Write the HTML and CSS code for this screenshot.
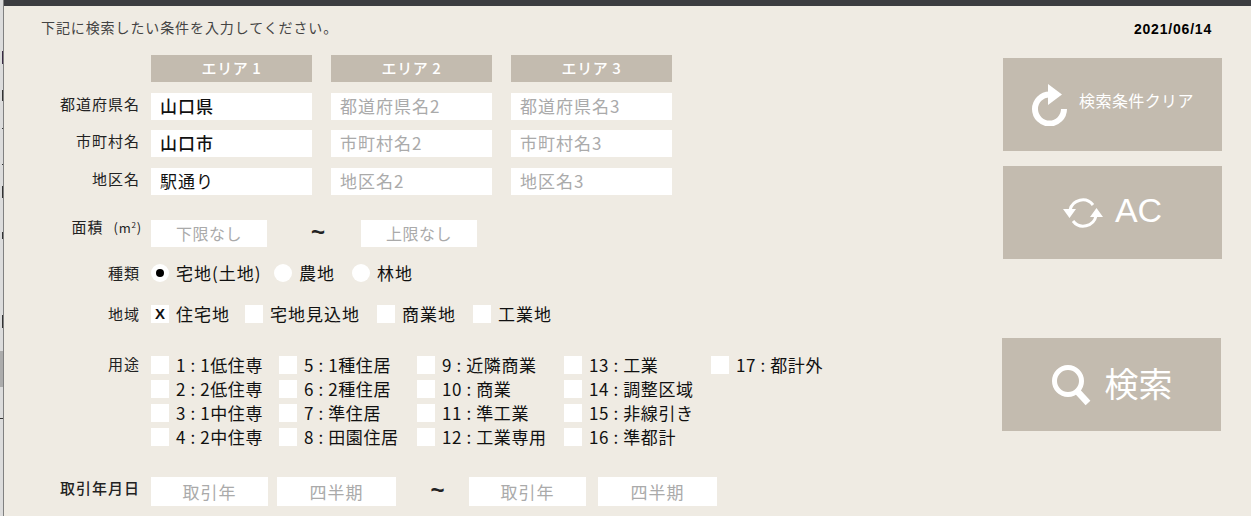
FILE: index.html
```html
<!DOCTYPE html>
<html lang="ja">
<head>
<meta charset="utf-8">
<title>検索条件</title>
<link rel="stylesheet" href="styles.css">
</head>
<body>
<div class="edge"><i class="m1"></i><i class="m2"></i><i class="m3"></i><i class="m4"></i><i class="m5"></i><i class="m6"></i><i class="m7"></i><i class="m8"></i><i class="m9"></i></div>
<div class="panel">
  <div class="topbar"></div>
  <div class="content">
    <div class="form">
      <p class="intro">下記に検索したい条件を入力してください。</p>

      <div class="row heads">
        <div class="label"></div>
        <div class="head">エリア 1</div><div class="head">エリア 2</div><div class="head">エリア 3</div>
      </div>
      <div class="row area"><div class="label">都道府県名</div><div class="field filled strong">山口県</div><div class="field">都道府県名2</div><div class="field">都道府県名3</div></div>
      <div class="row area"><div class="label">市町村名</div><div class="field filled strong">山口市</div><div class="field">市町村名2</div><div class="field">市町村名3</div></div>
      <div class="row area"><div class="label">地区名</div><div class="field filled">駅通り</div><div class="field">地区名2</div><div class="field">地区名3</div></div>

      <div class="row size">
        <div class="label">面積<span class="unit">(m<sup>2</sup>)</span></div>
        <div class="field center w116">下限なし</div>
        <div class="tilde t1">~</div>
        <div class="field center w116">上限なし</div>
      </div>

      <div class="row kinds">
        <div class="label">種類</div>
        <div class="opt w123"><span class="radio on"></span><span>宅地(土地)</span></div>
        <div class="opt w78"><span class="radio"></span><span>農地</span></div>
        <div class="opt"><span class="radio"></span><span>林地</span></div>
      </div>

      <div class="row region">
        <div class="label">地域</div>
        <div class="opt w94"><span class="check">X</span><span>住宅地</span></div>
        <div class="opt w132"><span class="check"></span><span>宅地見込地</span></div>
        <div class="opt w96"><span class="check"></span><span>商業地</span></div>
        <div class="opt"><span class="check"></span><span>工業地</span></div>
      </div>

      <div class="row uses">
        <div class="label">用途</div>
        <div class="usegrid">
          <div class="opt"><span class="check"></span><span>1 : 1低住専</span></div>
          <div class="opt"><span class="check"></span><span>5 : 1種住居</span></div>
          <div class="opt"><span class="check"></span><span>9 : 近隣商業</span></div>
          <div class="opt"><span class="check"></span><span>13 : 工業</span></div>
          <div class="opt"><span class="check"></span><span>17 : 都計外</span></div>
          <div class="opt"><span class="check"></span><span>2 : 2低住専</span></div>
          <div class="opt"><span class="check"></span><span>6 : 2種住居</span></div>
          <div class="opt"><span class="check"></span><span>10 : 商業</span></div>
          <div class="opt"><span class="check"></span><span>14 : 調整区域</span></div>
          <div></div>
          <div class="opt"><span class="check"></span><span>3 : 1中住専</span></div>
          <div class="opt"><span class="check"></span><span>7 : 準住居</span></div>
          <div class="opt"><span class="check"></span><span>11 : 準工業</span></div>
          <div class="opt"><span class="check"></span><span>15 : 非線引き</span></div>
          <div></div>
          <div class="opt"><span class="check"></span><span>4 : 2中住専</span></div>
          <div class="opt"><span class="check"></span><span>8 : 田園住居</span></div>
          <div class="opt"><span class="check"></span><span>12 : 工業専用</span></div>
          <div class="opt"><span class="check"></span><span>16 : 準都計</span></div>
        </div>
      </div>

      <div class="row dates">
        <div class="label">取引年月日</div>
        <div class="field center w117">取引年</div>
        <div class="field center w119 g9">四半期</div>
        <div class="tilde t2">~</div>
        <div class="field center w117">取引年</div>
        <div class="field center w119 g12">四半期</div>
      </div>
    </div>

    <aside class="side">
      <div class="date">2021/06/14</div>
      <div class="btn b1">
        <svg class="i1" viewBox="0 0 38 42" aria-hidden="true"><path d="M33 25a14.500 14.500 0 1 1-14.500-14.500" fill="none" stroke="#fff" stroke-width="6"/><path d="M17 0l14 10.500-14 10.500z" fill="#fff"/></svg>
        <span>検索条件クリア</span>
      </div>
      <div class="btn b2">
        <svg class="i2" viewBox="0 0 40 36" aria-hidden="true"><g fill="none" stroke="#fff" stroke-width="3"><path d="M7 15A13 13 0 0 1 30 10"/><path d="M33 21A13 13 0 0 1 10 26"/></g><path d="M0 14h13l-6.500 9zM27 22h13l-6.500-9z" fill="#fff"/></svg>
        <span>AC</span>
      </div>
      <div class="btn b3">
        <svg class="i3" viewBox="0 0 40 42" aria-hidden="true"><circle cx="17" cy="17" r="13.500" fill="none" stroke="#fff" stroke-width="5"/><path d="M26 27l11 12" stroke="#fff" stroke-width="6.500" fill="none"/></svg>
        <span>検索</span>
      </div>
    </aside>
  </div>
</div>
</body>
</html>
```

FILE: styles.css
```css
* { box-sizing: border-box; }
html, body { margin: 0; height: 100%; }
body {
  width: 1251px; height: 516px; overflow: hidden; display: flex;
  background: #efebe3; color: #1a1a1a;
  font-family: "Noto Sans CJK JP", "Noto Sans", sans-serif;
  font-size: 16px;
}
.edge { width: 4px; flex: none; background: #dcdcdc; border-right: 1px solid #808080; position: relative; }
.edge i { position: absolute; left: 2px; width: 1px; background: #333; }
.edge .m1 { top: 51px; height: 13px; background: #3a2a44; }
.m2 { top: 90px; height: 11px; }
.m3 { top: 128px; height: 1px; }
.m4 { top: 164px; height: 1px; }
.m5 { top: 186px; height: 12px; }
.m6 { top: 232px; height: 7px; }
.m7 { top: 315px; height: 13px; }
.edge .m8 { top: 351px; height: 36px; left: 0; width: 3px; background: #acacac; }
.edge .m9 { top: 418px; height: 1px; left: 0; width: 3px; background: #333; }
.panel { flex: 1; display: flex; flex-direction: column; min-width: 0; }
.topbar { height: 6px; background: #3c3d41; flex: none; }
.content { flex: 1; display: flex; justify-content: space-between; }
.form { width: 900px; }
.intro { margin: 12px 0 0 37px; font-size: 14px; line-height: 18px; color: #444; height: 18px; letter-spacing: .9px; }

.row { display: flex; align-items: center; }
.label { width: 136px; margin-right: 11px; flex: none; text-align: right; font-size: 15px; line-height: 20px; color: #222; letter-spacing: 1px; }
.heads { margin-top: 19px; }
.head { width: 161px; height: 27px; margin-right: 19px; background: #c3bbaf; color: #fff; text-align: center; font-size: 15px; line-height: 26px; letter-spacing: .6px; font-weight: 500; }
.area { margin-top: 11px; height: 27px; }
.area .label { align-self: flex-start; line-height: 21px; }
.area .field { width: 161px; margin-right: 19px; padding-left: 9px; line-height: 26px; }
.area + .area { margin-top: 10px; }
.area + .area + .area { margin-top: 11px; }
.field { height: 100%; background: #fff; color: #aaa; font-size: 17px; letter-spacing: 1px; line-height: 27px; flex: none; }
.filled { color: #111; }
.strong { font-weight: 500; }
.center { text-align: center; padding: 0; }
.size { margin-top: 25px; height: 27px; }
.size .field { font-size: 16px; letter-spacing: .5px; }
.size .label { align-self: flex-start; line-height: 14px; margin-right: 9px; width: 138px; }
.unit { font-size: 13px; margin-left: 10px; letter-spacing: .8px; }
sup { font-size: 8px; line-height: 0; }
.w116 { width: 116px; }
.w117 { width: 117px; }
.w119 { width: 119px; }
.g9 { margin-left: 9px; }
.g12 { margin-left: 12px; }
.tilde { text-align: center; font-family: "Liberation Sans", sans-serif; font-size: 24px; font-weight: 700; line-height: 20px; color: #222; padding-bottom: 3px; }
.t1 { width: 94px; padding-left: 8px; }
.t2 { width: 73px; padding-left: 10px; }
.kinds { margin-top: 17px; height: 18px; }
.region { margin-top: 23px; height: 18px; }
.opt { display: flex; align-items: center; font-size: 17px; letter-spacing: 1px; line-height: 18px; color: #111; white-space: nowrap; }
.radio { width: 18px; height: 18px; border-radius: 50%; background: #fff; margin-right: 7px; flex: none; display: flex; align-items: center; justify-content: center; }
.radio.on::after { content: ""; width: 8px; height: 8px; border-radius: 50%; background: #000; }
.check { width: 18px; height: 18px; background: #fff; margin-right: 7px; flex: none; text-align: center; font-family: "Liberation Sans", sans-serif; font-size: 15px; font-weight: 700; letter-spacing: 0; line-height: 18px; color: #111; }
.w123 { width: 123px; }
.w78 { width: 78px; }
.w94 { width: 94px; }
.w132 { width: 132px; }
.w96 { width: 96px; }
.uses { margin-top: 33px; align-items: flex-start; }
.uses .label { line-height: 16px; }
.usegrid { display: grid; grid-template-columns: 128px 138px 147px 147px auto; grid-auto-rows: 18px; row-gap: 6px; }
.usegrid .opt { letter-spacing: .6px; }
.dates { margin-top: 31px; height: 29px; }
.dates .field { line-height: 29px; }
.dates .label { align-self: flex-start; line-height: 21px; font-weight: 500; }

.side { width: 248px; display: flex; flex-direction: column; }
.date { height: 18px; margin-top: 14px; width: 209px; text-align: right; font-family: "Liberation Sans", sans-serif; font-size: 14px; letter-spacing: .8px; font-weight: 700; line-height: 18px; color: #000; }
.btn { width: 219px; height: 93px; background: #c3bbaf; color: #fff; display: flex; align-items: center; justify-content: center; flex: none; }
.b1 { margin-top: 20px; font-size: 16px; letter-spacing: .4px; gap: 10px; }
.b1 span { padding-bottom: 10px; }
.b2 { margin-top: 15px; font-family: "Liberation Sans", sans-serif; font-size: 34px; gap: 12px; }
.b2 span { padding-bottom: 4px; }
.b3 { margin-top: 79px; margin-left: -1px; font-size: 34px; gap: 14px; }
.b3 span { padding-bottom: 5px; }
.i1 { width: 38px; height: 42px; }
.i2 { width: 40px; height: 36px; }
.i3 { width: 40px; height: 42px; }
```
